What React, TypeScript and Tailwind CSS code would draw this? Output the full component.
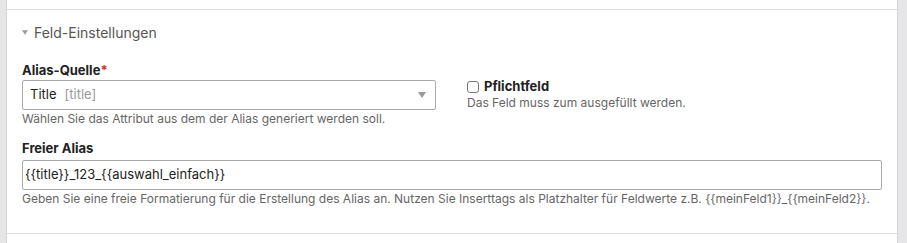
const font = { fontFamily: 'Inter, "Liberation Sans", Arial, sans-serif' };

function Caret({ className }: { className?: string }) {
  return (
    <svg viewBox="0 0 8 6" className={className} aria-hidden>
      <path d="M0 0h8L4 6z" fill="currentColor" />
    </svg>
  );
}

export default function App() {
  return (
    <div className="h-[243px] w-[907px] bg-[#e6e6e8] flex overflow-hidden" style={font}>
      <div className="w-[6px] shrink-0" />
      <div className="flex-1 bg-white border-x border-[#d7d7d7] flex flex-col">
        <div className="h-[10px] border-b border-[#dddddd]" />
        <div className="flex-1 px-[15px]">
          <div className="flex items-center gap-[6px] h-[21px] mt-[12px] text-[14px] text-[#555]">
            <Caret className="w-[6px] h-[5px] text-[#999]" />
            <span>Feld-Einstellungen</span>
          </div>

          <div className="grid grid-cols-2 mt-[19px]">
            <div className="pr-[15px]">
              <div className="text-[13px] font-bold text-[#222] h-[16px] leading-[16px]">
                Alias-Quelle<span className="text-[#c33]">*</span>
              </div>
              <div className="mt-[2px] h-[30px] w-[414px] border border-[#aaa] rounded-[2px] flex items-center pl-[7px] pr-[9px] text-[13px]">
                <span className="text-[#222]">Title</span>
                <span className="ml-[8px] text-[#999]">[title]</span>
                <Caret className="ml-auto w-[8px] h-[6px] text-[#999]" />
              </div>
              <p className="mt-[1px] text-[12px] text-[#666] leading-[16px]">
                Wählen Sie das Attribut aus dem der Alias generiert werden soll.
              </p>
            </div>
            <div className="pl-[15px] pt-[17px]">
              <label className="flex items-center gap-[5px] h-[16px]">
                <span className="w-[12px] h-[12px] border border-[#777] rounded-[3px] bg-white" />
                <span className="text-[13px] font-bold text-[#222]">Pflichtfeld</span>
              </label>
              <p className="text-[12px] text-[#666] leading-[16px]">
                Das Feld muss zum ausgefüllt werden.
              </p>
            </div>
          </div>

          <div className="mt-[13px] text-[13px] font-bold text-[#222] h-[16px] leading-[16px]">Freier Alias</div>
          <div className="mt-[4px] h-[30px] w-[860px] border border-[#aaa] rounded-[2px] flex items-center px-[2px] text-[13px] text-[#222]">
            {'{{title}}_123_{{auswahl_einfach}}'}
          </div>
          <p className="mt-[1px] text-[12px] text-[#666] leading-[16px]">
            Geben Sie eine freie Formatierung für die Erstellung des Alias an. Nutzen Sie Inserttags als Platzhalter für Feldwerte z.B. {'{{meinFeld1}}_{{meinFeld2}}'}.
          </p>
        </div>
        <div className="h-[10px] border-t border-[#dddddd]" />
      </div>
      <div className="w-[9px] shrink-0" />
    </div>
  );
}
